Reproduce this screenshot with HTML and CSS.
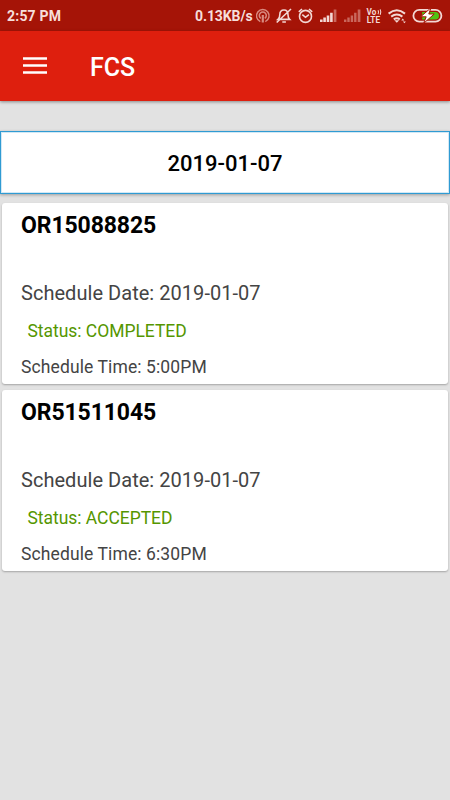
FILE: index.html
```html
<!DOCTYPE html>
<html lang="en">
<head>
<meta charset="utf-8">
<title>FCS</title>
<link rel="stylesheet" href="styles.css">
</head>
<body>
<div class="statusbar">
  <span class="clock">2:57 PM</span>
  <span class="speed">0.13KB/s</span>
  <svg class="status-icons" width="195" height="31" viewBox="255 0 195 31" fill="none" stroke="#f3d8d5" stroke-width="1.6">
    <g stroke="#d98a80" stroke-width="1.5">
      <path d="M260.3 21.6a6.3 6.3 0 1 1 5 0M260.8 18.4a3.5 3.5 0 1 1 4 0"/>
      <path d="M262.8 15v7.5" stroke-width="2.2"/>
    </g>
    <path d="M278 19.4h11.6c-1.6-1.5-1.6-2.7-1.6-4.7 0-3-1.4-4.7-4-4.7s-4.2 1.7-4.2 4.7c0 2 0 3.2-1.8 4.7zM282.3 22h3.6M276.7 22.5L291 9"/>
    <circle cx="305.5" cy="16.4" r="6"/>
    <path d="M302.3 14.6l3.2 2.7 3.4-2.7M298.8 11.8l3.2-2.8M312.2 11.8l-3.2-2.8"/>
    <g stroke="none" fill="#f3d8d5">
      <path d="M320 19.5h2.6V22H320zM323.3 17.6h2.6V22h-2.6zM326.7 15.5h2.6V22h-2.6zM330.1 12.8h2.6V22h-2.6z"/>
      <path fill="#c9675d" d="M333.7 9.6h2.7V22h-2.7zM344 19.5h2.4V22H344zM347.3 17.6h2.4V22h-2.4zM350.7 15.5h2.4V22h-2.4zM354.1 12.8h2.4V22h-2.4zM357.7 9.6h2.7V22h-2.7z"/>
      <text class="volte"><tspan x="366.6" y="15">Vo</tspan><tspan x="366.8" y="22.6">LTE</tspan></text>
    </g>
    <path d="M378 10.2q1.2 2 0 4M380.2 9.4q1.2 2.7 0 5.4" stroke-width="1.1"/>
    <path d="M388.6 13.6q8.2-6.6 16.4 0M391.2 16.6q5.6-4.2 11.2 0M393.8 19.4q3-2.3 6 0" stroke-width="2"/>
    <path d="M394.3 20.2h5l-2.5 2.6zM402.8 18.6l1.5 1.8h-3zM404.4 23.2l-1.5-1.8h3z" fill="#f3d8d5" stroke="none"/>
    <rect x="413.4" y="9.8" width="28" height="11.8" rx="5.9" stroke-width="1.8"/>
    <path d="M422.2 11.9h13a3.8 3.8 0 0 1 0 7.6h-13z" fill="#4fc414" stroke="none"/>
    <path d="M431 7.8l-10.4 9h5.6l-2.6 6.6 10.6-9.4h-5.4z" fill="#fff" stroke="#a51407" stroke-width="1"/>
  </svg>
</div>
<header class="appbar">
  <svg class="menu" width="24" height="18" viewBox="0 0 24 18" fill="#fff"><path d="M0 0.2h24v2.6H0zM0 7.2h24v2.6H0zM0 14.2h24v2.6H0z"/></svg>
  <h1>FCS</h1>
</header>
<main>
  <button class="date">2019-01-07</button>
  <article class="card">
    <h2>OR15088825</h2>
    <p class="day">Schedule Date: 2019-01-07</p>
    <p class="state">Status: COMPLETED</p>
    <p class="time">Schedule Time: 5:00PM</p>
  </article>
  <article class="card">
    <h2>OR51511045</h2>
    <p class="day">Schedule Date: 2019-01-07</p>
    <p class="state">Status: ACCEPTED</p>
    <p class="time">Schedule Time: 6:30PM</p>
  </article>
</main>
</body>
</html>
```
FILE: styles.css
```css
* { box-sizing: border-box; }
body {
  margin: 0;
  height: 800px;
  overflow: hidden;
  background: #e2e2e2;
  font-family: Roboto, sans-serif;
}
h1, h2, p { margin: 0; }
.statusbar {
  display: flex;
  height: 31px;
  background: #a51407;
  color: #f6dedb;
  font-size: 14px;
  font-weight: 700;
  line-height: 33px;
}
.clock { width: 187px; padding-left: 7px; letter-spacing: 0.2px; }
.speed { width: 68px; padding-left: 8px; white-space: nowrap; letter-spacing: -0.1px; }
.status-icons { flex: none; }
.volte { font: 700 8.2px Roboto, sans-serif; }
.appbar {
  display: flex;
  align-items: center;
  height: 70px;
  padding: 2px 0 0 23px;
  background: #de1f0e;
  box-shadow: 0 1px 3px rgba(0, 0, 0, 0.4);
}
.menu { margin-top: -2px; }
h1 {
  margin: 2px 0 0 43px;
  color: #fff;
  font-size: 25px;
  font-weight: 500;
  line-height: 30px;
}
.date {
  display: block;
  width: 100%;
  height: 63px;
  margin: 30px 0 9px;
  padding: 2px 0 0;
  border: 1px solid #2f9bd3;
  background: #fff;
  box-shadow: 0 1px 3px rgba(0, 0, 0, 0.3), inset 0 0 0 1px #d3e8f4;
  color: #000;
  font: 500 22px/30px Roboto, sans-serif;
}
.card {
  height: 181px;
  margin: 0 2px 6px;
  padding: 8px 0 0 19px;
  border-radius: 3px;
  background: #fff;
  box-shadow: 0 1px 2px rgba(0, 0, 0, 0.28);
  color: #444;
}
h2 { color: #000; font-size: 23px; font-weight: 700; line-height: 30px; letter-spacing: -0.1px; }
.day { margin-top: 37px; font-size: 20px; line-height: 30px; letter-spacing: 0.04px; }
.state { margin: 10px 0 0 6.4px; color: #559600; font-size: 17.5px; line-height: 26px; letter-spacing: -0.03px; }
.time { margin-top: 10px; font-size: 17.5px; line-height: 26px; letter-spacing: 0.11px; }
```
